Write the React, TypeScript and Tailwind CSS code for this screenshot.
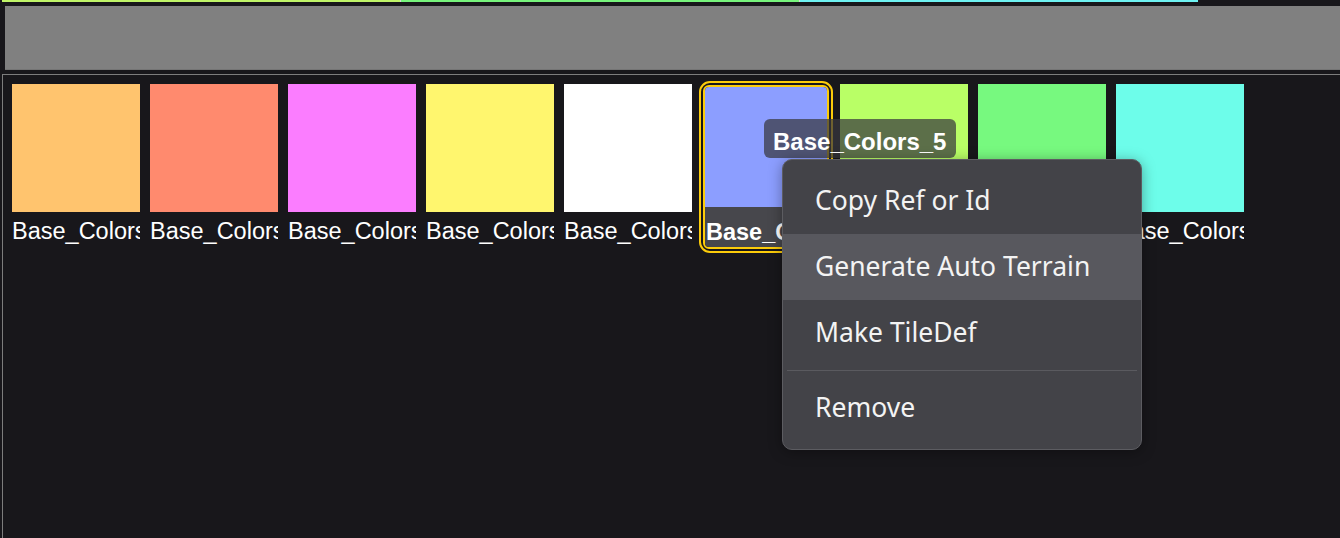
const tiles = [
  { id: 0, color: "bg-[#ffc46e]" },
  { id: 1, color: "bg-[#ff8a6e]" },
  { id: 2, color: "bg-[#fb7dff]" },
  { id: 3, color: "bg-[#fff66e]" },
  { id: 4, color: "bg-[#ffffff]" },
  { id: 5, color: "bg-[#8c9eff]", selected: true },
  { id: 6, color: "bg-[#b9ff66]" },
  { id: 7, color: "bg-[#77f97f]" },
  { id: 8, color: "bg-[#6dfdea]" },
];

const menuItems = [
  { label: "Copy Ref or Id" },
  { label: "Generate Auto Terrain", hover: true },
  { label: "Make TileDef" },
  { label: "---" },
  { label: "Remove" },
];

function Tile({ id, color, selected }: { id: number; color: string; selected?: boolean }) {
  const name = `Base_Colors_${id}`;

  if (selected) {
    return (
      <div className="w-[128px] shrink-0 self-start rounded-lg p-px outline-2 outline-offset-1 outline-[#fccc0a]">
        <div className="overflow-hidden rounded-md border-2 border-[#fccc0a]">
          <div className={`h-[120px] ${color}`} />
          <div className="h-10 overflow-hidden whitespace-nowrap bg-[#47474c] pl-px pt-3 text-[23.5px] font-bold leading-[26px] text-white">
            {name}
          </div>
        </div>
      </div>
    );
  }

  return (
    <div className="w-[128px] shrink-0">
      <div className={`h-[128px] ${color}`} />
      <div className="mt-1.5 overflow-hidden whitespace-nowrap text-[23.5px] leading-[26px] text-white">
        {name}
      </div>
    </div>
  );
}

export default function App() {
  return (
    <div className="relative flex h-[538px] w-[1340px] flex-col overflow-hidden bg-[#18171b] font-['Liberation_Sans',Arial,sans-serif]">
      {/* strip of the row above */}
      <div className="ml-[2px] flex h-[2px] w-[1196px] gap-px bg-[#d8d8d8]">
        <div className="flex-1 bg-[#c0f468]" />
        <div className="flex-1 bg-[#77f47c]" />
        <div className="flex-1 bg-[#6ef2f2]" />
      </div>

      {/* toolbar */}
      <div className="ml-[5px] mt-1 h-16 border-b border-[#747474] bg-[#808080]" />

      {/* tile panel */}
      <div className="ml-[2px] mt-1 flex-1 border-l border-t border-[#7d7d7d] pl-[9px] pt-[9px]">
        <div className="flex gap-[10px]">
          {tiles.map((t) => (
            <Tile key={t.id} {...t} />
          ))}
        </div>
      </div>

      {/* tooltip */}
      <div className="absolute left-[764px] top-[119px] h-[39px] rounded-md bg-[rgba(56,56,62,0.72)] pl-[9px] pr-[10px] pt-[6px] text-[24px] font-bold leading-[33px] text-white">
        Base_Colors_5
      </div>

      {/* context menu */}
      <div className="absolute left-[782px] top-[159px] w-[360px] rounded-[10px] border border-[#5c5c61] bg-[#434348] py-2 font-['Noto_Sans',sans-serif] text-[26.5px] text-[#f3f3f3] shadow-[0_2px_14px_rgba(0,0,0,0.35)]">
        {menuItems.map((item, i) =>
          item.label === "---" ? (
            <div key={i} className="mx-1 my-1 h-px bg-[#5a5a5f]" />
          ) : (
            <div
              key={i}
              className={`flex h-[66px] items-center px-8 ${item.hover ? "bg-[#58585e]" : ""}`}
            >
              {item.label}
            </div>
          ),
        )}
      </div>
    </div>
  );
}
